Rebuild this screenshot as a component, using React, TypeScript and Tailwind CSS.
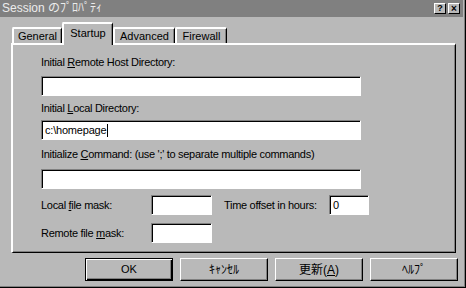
import * as React from 'react';

const font = "font-['Liberation_Sans','Noto_Sans_CJK_JP',sans-serif]";

function Field({ w, value, caret }: { w: string; value?: string; caret?: boolean }) {
  return (
    <div
      className={`${w} h-[20px] bg-white border border-t-[#808080] border-l-[#808080] border-b-white border-r-white shadow-[inset_1px_1px_0_#000] flex items-center pl-[3px] text-[11px] tracking-[-0.2px] text-black`}
    >
      {value}
      {caret && <span className="inline-block w-px h-[13px] bg-black ml-px" />}
    </div>
  );
}

function Label({ children, className = '' }: { children: React.ReactNode; className?: string }) {
  return (
    <div className={`h-[14px] leading-[14px] text-[11px] tracking-[-0.3px] text-black whitespace-nowrap ${className}`}>
      {children}
    </div>
  );
}

function Tab({ label, w, active }: { label: string; w: string; active?: boolean }) {
  return (
    <div
      className={
        active
          ? `${w} h-[23px] pt-[2px] bg-[#b9b9b9] border-t-2 border-l-2 border-white border-r border-r-black shadow-[inset_-1px_0_0_#808080] rounded-tl-[2px] rounded-tr-[2px] text-[11px] leading-[14px] text-center relative z-10`
          : `${w} h-[16px] mb-[2px] bg-[#b9b9b9] border-t-2 border-l-2 border-white border-r border-r-black shadow-[inset_-1px_0_0_#808080] rounded-tl-[2px] rounded-tr-[2px] text-[11px] leading-[13px] text-center pt-px`
      }
    >
      {label}
    </div>
  );
}

function Btn({ children, primary }: { children: React.ReactNode; primary?: boolean }) {
  return (
    <button
      className={
        primary
          ? 'w-[88px] h-[23px] border border-black bg-[#b9b9b9] shadow-[inset_1px_1px_0_#fff,inset_-1px_-1px_0_#000,inset_-2px_-2px_0_#808080] text-[11px] text-black flex items-center justify-center'
          : 'w-[88px] h-[23px] border border-t-white border-l-white border-r-black border-b-black bg-[#b9b9b9] shadow-[inset_-1px_-1px_0_#808080] text-[12px] text-black flex items-center justify-center'
      }
    >
      {children}
    </button>
  );
}

export default function App() {
  return (
    <div className={`w-[466px] h-[288px] bg-[#b9b9b9] border-r border-b border-black shadow-[inset_-1px_-1px_0_#808080] overflow-hidden ${font}`}>
      {/* title bar */}
      <div className="h-[17px] mr-[2px] bg-[#808080] flex items-center justify-between pl-[2px] pr-[3px]">
        <span className="text-[12px] leading-[17px] text-[#ececec] whitespace-nowrap">Session のﾌﾟﾛﾊﾟﾃｨ</span>
        <div className="flex gap-[2px]">
          <div className="w-[12px] h-[11px] bg-[#b9b9b9] border border-t-white border-l-white border-r-black border-b-black text-[9px] leading-[9px] font-bold text-black flex items-center justify-center">?</div>
          <div className="w-[12px] h-[11px] bg-[#b9b9b9] border border-t-white border-l-white border-r-black border-b-black text-[10px] leading-[9px] font-bold text-black flex items-center justify-center">×</div>
        </div>
      </div>

      {/* tabs */}
      <div className="flex items-end h-[28px] pl-[12px] -mb-[2px] relative z-10">
        <Tab label="General" w="w-[50px]" />
        <Tab label="Startup" w="w-[51px]" active />
        <Tab label="Advanced" w="w-[62px]" />
        <Tab label="Firewall" w="w-[52px]" />
      </div>

      {/* panel */}
      <div className="ml-[11px] w-[445px] h-[210px] border-t-2 border-l-2 border-white border-r border-b border-r-black border-b-black shadow-[inset_-1px_-1px_0_#808080] pl-[28px] flex flex-col">
        <Label className="mt-[10px]">
          Initial <span className="underline">R</span>emote Host Directory:
        </Label>
        <div className="mt-[7px]">
          <Field w="w-[320px]" />
        </div>
        <Label className="mt-[5px]">
          Initial <span className="underline">L</span>ocal Directory:
        </Label>
        <div className="mt-[5px]">
          <Field w="w-[320px]" value="c:\homepage" caret />
        </div>
        <Label className="mt-[7px]">
          Initialize <span className="underline">C</span>ommand: (use ';' to separate multiple commands)
        </Label>
        <div className="mt-[8px]">
          <Field w="w-[320px]" />
        </div>
        <div className="mt-[6px] flex items-center">
          <Label className="w-[110px]">
            Local <span className="underline">f</span>ile mask:
          </Label>
          <Field w="w-[61px]" />
          <Label className="ml-[12px] w-[105px]">Time offset in hours:</Label>
          <Field w="w-[40px]" value="0" />
        </div>
        <div className="mt-[8px] flex items-center">
          <Label className="w-[110px]">
            Remote file <span className="underline">m</span>ask:
          </Label>
          <Field w="w-[61px]" />
        </div>
      </div>

      {/* buttons */}
      <div className="flex gap-[7px] pl-[85px] mt-[5px]">
        <Btn primary>OK</Btn>
        <Btn>ｷｬﾝｾﾙ</Btn>
        <Btn>
          更新(<span className="underline">A</span>)
        </Btn>
        <Btn>ﾍﾙﾌﾟ</Btn>
      </div>
    </div>
  );
}
